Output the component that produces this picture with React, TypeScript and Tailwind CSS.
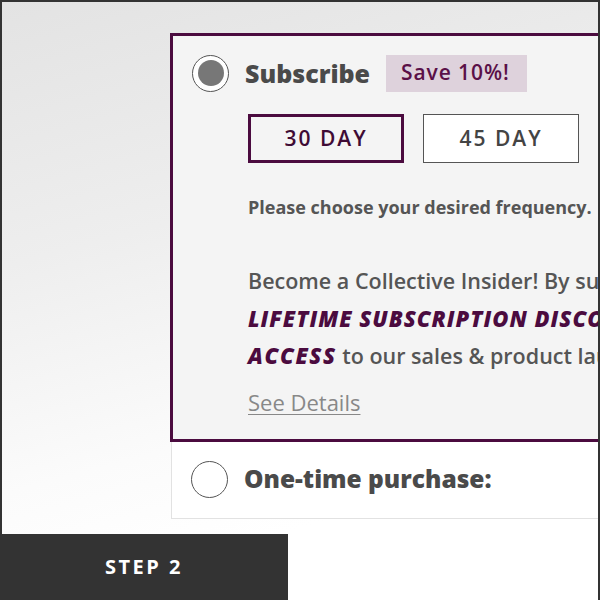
import { useState } from "react";

const RadioDot = ({ checked }: { checked: boolean }) => (
    <div className="w-[37px] h-[37px] rounded-full border-[1.5px] border-[#555] flex items-center justify-center shrink-0 bg-white">
        {checked && <div className="w-[26px] h-[26px] rounded-full bg-[#777]" />}
    </div>
);

const App = () => {
    const [plan, setPlan] = useState("subscribe");
    const [days, setDays] = useState(30);

    return (
        <div
            className="w-[600px] h-[600px] relative overflow-hidden border-t-2 border-l-2 border-r-2 border-[#333] bg-[linear-gradient(165deg,#e3e3e3_0%,#eeeeee_35%,#fbfbfb_65%,#ffffff_80%)] pt-[31px] pl-[168px]"
            style={{ fontFamily: "'Open Sans', sans-serif" }}
        >
            <div className="w-[520px] flex flex-col">
                <div
                    onClick={() => setPlan("subscribe")}
                    className="border-[3px] border-[#4b0b3f] bg-[#f4f4f4] pt-[18px] pb-[18px] cursor-pointer"
                >
                    <div className="flex items-center pl-[19px] gap-[16px] h-[38px]">
                        <RadioDot checked={plan === "subscribe"} />
                        <div className="text-[25px] font-extrabold text-[#4a4a4a] leading-none">
                            Subscribe
                        </div>
                        <div className="h-[37px] pl-[15px] pr-[17px] bg-[#ded2dc] text-[#5a1048] text-[21px] font-semibold tracking-[0.9px] flex items-center">
                            Save 10%!
                        </div>
                    </div>

                    <div className="pl-[75px] flex flex-col">
                        <div className="flex gap-[19px] mt-[22px]">
                            {[30, 45, 60].map((d) => (
                                <div
                                    key={d}
                                    onClick={() => setDays(d)}
                                    className={
                                        days === d
                                            ? "w-[156px] h-[49px] shrink-0 border-[3px] border-[#4b0b3f] text-[#3f0b35] text-[21px] font-semibold tracking-[2px] flex items-center justify-center"
                                            : "w-[156px] h-[49px] shrink-0 border-[1.5px] border-[#555] bg-white text-[#444] text-[21px] font-semibold tracking-[2px] flex items-center justify-center"
                                    }
                                >
                                    {d} DAY
                                </div>
                            ))}
                        </div>

                        <div className="mt-[32px] text-[18px] font-bold text-[#555] leading-[24px] whitespace-nowrap">
                            Please choose your desired frequency.
                        </div>

                        <div className="mt-[43px] text-[21.5px] font-semibold text-[#555] leading-[37.5px] whitespace-nowrap">
                            Become a Collective Insider! By subscribing you get a
                            <br />
                            <span className="italic font-extrabold text-[#4b0b3f] text-[22px] tracking-[1px]">
                                LIFETIME SUBSCRIPTION DISCOUNT
                            </span>{" "}
                            and
                            <br />
                            <span className="italic font-extrabold text-[#4b0b3f] text-[22px] tracking-[1.6px]">
                                ACCESS
                            </span>{" "}
                            to our sales &amp; product launches.
                        </div>

                        <div className="mt-[9px] text-[22px] text-[#888] underline underline-offset-[3px] decoration-1 leading-[37px]">
                            See Details
                        </div>
                    </div>
                </div>

                <div
                    onClick={() => setPlan("once")}
                    className="ml-[1px] h-[77px] border border-t-0 border-[#e2e2e2] bg-white flex items-center pl-[19px] gap-[16px] cursor-pointer"
                >
                    <RadioDot checked={plan === "once"} />
                    <div className="text-[24.5px] font-extrabold text-[#4a4a4a] leading-none">
                        One-time purchase:
                    </div>
                </div>
            </div>

            <div className="absolute left-[-2px] bottom-0 w-[288px] h-[66px] bg-[#333] flex items-center justify-center">
                <span className="text-white text-[20px] font-bold tracking-[2.5px]">STEP 2</span>
            </div>
        </div>
    );
};

export default App;
